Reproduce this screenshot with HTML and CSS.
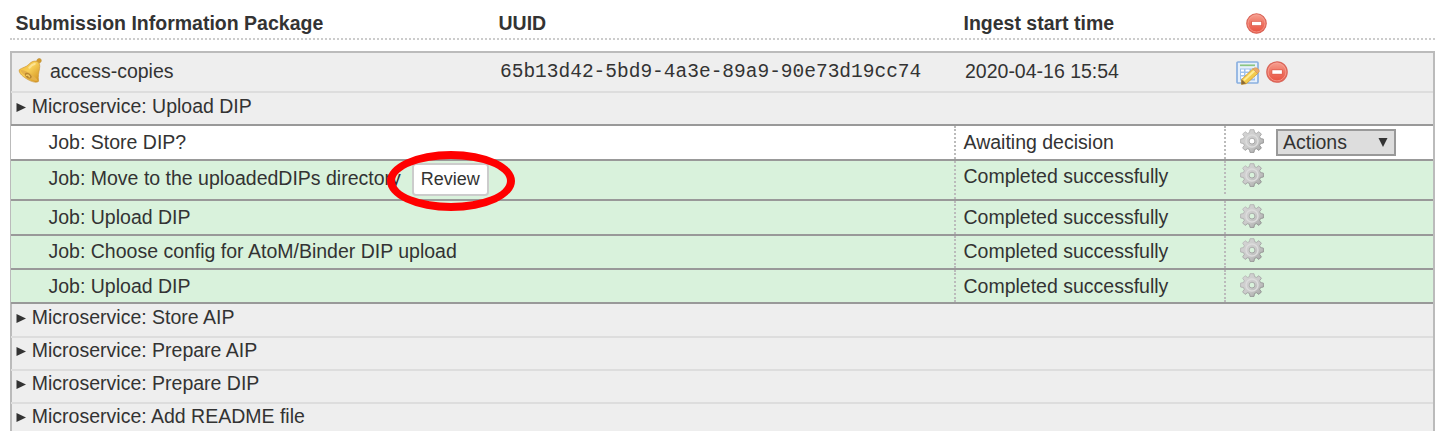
FILE: index.html
```html
<!DOCTYPE html>
<html lang="en">
<head>
<meta charset="utf-8">
<title>Ingest</title>
<link rel="stylesheet" href="styles.css">
</head>
<body>
<svg class="defs" width="0" height="0" aria-hidden="true">
  <defs>
    <linearGradient id="redFill" x1="0" y1="0" x2="0" y2="1"><stop offset="0" stop-color="#f7a292"/><stop offset=".5" stop-color="#ee7362"/><stop offset="1" stop-color="#e9503f"/></linearGradient>
    <linearGradient id="gearFill" x1="0" y1="0" x2="1" y2="1"><stop offset="0" stop-color="#d6d6d6"/><stop offset=".55" stop-color="#cacaca"/><stop offset="1" stop-color="#a0a0a0"/></linearGradient>
    <linearGradient id="gearEdge" x1="0" y1="0" x2="1" y2="1"><stop offset="0" stop-color="#c2c2c2"/><stop offset="1" stop-color="#858585"/></linearGradient>
    <linearGradient id="bellFill" x1="0" y1="0" x2="1" y2="1"><stop offset="0" stop-color="#eeb02c"/><stop offset=".45" stop-color="#f7cf58"/><stop offset="1" stop-color="#d08c18"/></linearGradient>
    <symbol id="minus" viewBox="0 0 22 22">
      <circle cx="11" cy="11" r="10.200" fill="url(#redFill)" stroke="#d9665a" stroke-width="1.200"/>
      <circle cx="11" cy="11" r="8.900" fill="none" stroke="#f6a194" stroke-width=".8"/>
      <rect x="6.300" y="9.200" width="9.600" height="3.600" fill="#fff" stroke="#dd5a4a" stroke-width="1.400" paint-order="stroke"/>
    </symbol>
    <symbol id="gear" viewBox="0 0 24 24">
      <path fill="url(#gearFill)" stroke="url(#gearEdge)" stroke-width=".9" stroke-linejoin="round" fill-rule="evenodd" d="M10 .7h4l.5 2.900 2 .8 2.400-1.700 2.500 2.500-1.700 2.400.8 2 2.900.5v3.900l-2.900.5-.8 2 1.700 2.400-2.500 2.500-2.400-1.700-2 .8-.5 2.900h-4l-.5-2.900-2-.8-2.400 1.700-2.500-2.500 1.700-2.400-.8-2-2.900-.5v-3.900l2.900-.5.8-2-1.700-2.400 2.500-2.500 2.400 1.700 2-.8zM12 9.200a2.900 2.900 0 1 0 0 5.800 2.900 2.900 0 0 0 0-5.800z"/>
      <circle cx="12" cy="12" r="6" fill="none" stroke="#dcdcdc" stroke-width="1.500"/>
    </symbol>
  </defs>
</svg>

<header class="head">
  <div class="head-name">Submission Information Package</div>
  <div class="head-uuid">UUID</div>
  <div class="head-time">Ingest start time</div>
  <div class="head-action"><svg width="21" height="21"><use href="#minus"/></svg></div>
</header>

<main class="sip">
  <div class="sip-row">
    <div class="sip-name">
      <svg class="bell" width="24" height="25" viewBox="0 0 24 25">
        <path d="M18.600 3.600c0-2.500 2.300-3.900 4-2.700 1.400 1.300.8 3.700-1.500 4.200z" fill="#d29a2c" stroke="#b98a35" stroke-width=".5"/>
        <path d="M1.300 11.800C4 9.500 8.300 9.300 11 6.200 13.500 3.400 16.500 2.500 19 3.500c2.800 1.200 3.100 3.700 2.500 7.200-.7 4-1.700 7.300-.9 12.600-2 1.700-6.600.7-10.600-1.700C5.500 19.200.3 15 1.300 11.800z" fill="url(#bellFill)" stroke="#cf9836" stroke-width=".7"/>
        <path d="M2.600 12.200c3.300-.9 14.700 5.300 17.300 10.600-4 .8-16.600-6.100-17.300-10.600z" fill="#e5b24a"/>
        <path d="M7.300 15.300c1.600-1.400 5 .3 6.500 3.200-.2 1.900-1.900 2.500-3.200 2.100-2.200-.6-4.300-3.200-3.300-5.300z" fill="#b8852f"/>
        <path d="M8.600 17.200c1.300-.4 2.300.2 2.800 1.500" fill="none" stroke="#f2cc66" stroke-width="1.500" stroke-linecap="round"/>
        <path d="M11.400 9.700c1.600-2.200 3.200-3.500 5.300-3.900" fill="none" stroke="#fce392" stroke-width="2.200" stroke-linecap="round"/>
      </svg>
      <span>access-copies</span>
    </div>
    <div class="sip-uuid">65b13d42-5bd9-4a3e-89a9-90e73d19cc74</div>
    <div class="sip-time">2020-04-16 15:54</div>
    <div class="sip-actions">
      <svg width="24" height="24" viewBox="0 0 24 24">
        <rect x="1" y="1" width="21" height="21" rx="1" fill="#e6f0fb" stroke="#8ab0e0" stroke-width="1.700"/>
        <path d="M4 4.300h15" stroke="#8bc581" stroke-width="1.700"/>
        <path d="M4 7.500h15v12H4z" fill="#9fc1ec"/>
        <path d="M5 8.500h3v2H5zm4.500 0h4v2h-4zm5.500 0h3.500v2H15zM5 12h3v2H5zm4.500 0h4v2h-4zm5.500 0h3.500v2H15zM5 15.500h3v2H5zm4.500 0h4v2h-4zm5.500 0h3.500v2H15z" fill="#fff"/>
        <path d="M5.600 18.500 16.900 7.700l5 4.600-11.600 10.400-4.700.7z" fill="#f3cb4b" stroke="#d09a36" stroke-width=".8"/>
        <path d="M8 19.300 18.700 9.400" stroke="#ffec94" stroke-width="2"/>
        <path d="m16.700 8 1.900-1.200c2.200-.6 5.300 1.600 4.600 4l-1.500 1.700z" fill="#eaab67" stroke="#d08d50" stroke-width=".5"/>
        <path d="m5.600 18.500 4.500 4-4.800.9z" fill="#8a6937"/>
      </svg>
      <svg width="22" height="22"><use href="#minus"/></svg>
    </div>
  </div>

  <div class="micro micro-open"><i class="caret"></i>Microservice: Upload DIP</div>

  <div class="job job-waiting">
    <div class="job-name">Job: Store DIP?</div>
    <div class="job-status">Awaiting decision</div>
    <div class="job-tools"><svg width="24" height="24"><use href="#gear"/></svg><div class="select" role="button"><span>Actions</span><i class="select-arrow"></i></div></div>
  </div>
  <div class="job job-review">
    <div class="job-name">Job: Move to the uploadedDIPs directory
      <span class="review-wrap"><button class="review">Review</button><i class="ring"></i></span>
    </div>
    <div class="job-status">Completed successfully</div>
    <div class="job-tools"><svg width="24" height="24"><use href="#gear"/></svg></div>
  </div>
  <div class="job">
    <div class="job-name">Job: Upload DIP</div>
    <div class="job-status">Completed successfully</div>
    <div class="job-tools"><svg width="24" height="24"><use href="#gear"/></svg></div>
  </div>
  <div class="job job-tight">
    <div class="job-name">Job: Choose config for AtoM/Binder DIP upload</div>
    <div class="job-status">Completed successfully</div>
    <div class="job-tools"><svg width="24" height="24"><use href="#gear"/></svg></div>
  </div>
  <div class="job job-last">
    <div class="job-name">Job: Upload DIP</div>
    <div class="job-status">Completed successfully</div>
    <div class="job-tools"><svg width="24" height="24"><use href="#gear"/></svg></div>
  </div>

  <div class="micro micro-first"><i class="caret"></i>Microservice: Store AIP</div>
  <div class="micro"><i class="caret"></i>Microservice: Prepare AIP</div>
  <div class="micro"><i class="caret"></i>Microservice: Prepare DIP</div>
  <div class="micro"><i class="caret"></i>Microservice: Add README file</div>
</main>
</body>
</html>
```

FILE: styles.css
```css
* { box-sizing: border-box; }
html, body { height: 431px; overflow: hidden; }
body {
  margin: 0;
  padding: 0 12px 0 10px;
  background: #fff;
  color: #333;
  font: 19.5px/22px "Liberation Sans", Arial, sans-serif;
}
svg { display: block; flex: none; }
.defs { position: absolute; }

.head {
  display: grid;
  grid-template-columns: 483px 465px 282px 1fr;
  height: 40px;
  padding: 12px 0 0 5.5px;
  border-bottom: 2px dotted #ccc;
  font-weight: bold;
  white-space: nowrap;
}
.head-action { padding: 1px 0 0 0.5px; }

.sip {
  height: 400px;
  margin-top: 11px;
  border: 2px solid #bbb;
  background: #eee;
  white-space: nowrap;
}
.sip-row {
  display: grid;
  grid-template-columns: 488px 465px 271px 1fr;
  height: 40px;
  margin-left: -1px;
  padding: 7px 0 0 1px;
  border-bottom: 2px solid #ddd;
}
.sip-name { display: flex; gap: 8px; padding-left: 6px; }
.bell { margin-top: -2px; }
.sip-uuid {
  padding-top: 1px;
  font-family: "Liberation Mono", "Courier New", monospace;
}
.sip-actions { display: flex; gap: 6px; padding-top: 1px; }

.micro {
  display: flex;
  height: 33px;
  margin-left: -1px;
  padding: 1px 0 0 5px;
  border-bottom: 2px solid #ddd;
}
.micro-open { padding-top: 2px; border-bottom-color: #999; }
.micro-first { height: 34px; padding-top: 2px; }
.caret {
  width: 10px;
  height: 9px;
  margin: 8px 5.8px 0 0;
  background: #333;
  clip-path: polygon(5% 0, 100% 50%, 5% 100%);
}

.job {
  display: grid;
  grid-template-columns: 943px 270px 1fr;
  height: 35px;
  margin-left: -1px;
  border-bottom: 2px solid #999;
  background: #d9f2dc;
}
.job-waiting { background: #fff; }
.job-review { height: 40px; }
.job-tight, .job-last { height: 34px; }
.job-name { display: flex; padding: 5px 0 0 37.5px; }
.job-status { padding: 5px 0 0 7.5px; border-left: 2px dotted #bbb; }
.job-tools { display: flex; gap: 12px; padding: 3px 0 0 14px; border-left: 2px dotted #bbb; }
.job-review .job-name { padding-top: 6px; }
.job-review .job-status,
.job-tight .job-name,
.job-tight .job-status { padding-top: 4px; }
.job-review .job-tools,
.job-tight .job-tools { padding-top: 2px; }
.job-review .job-tools { height: 33px; }

.select {
  display: flex;
  justify-content: space-between;
  width: 120px;
  height: 27px;
  padding: 0 6px 0 5px;
  border: 2px solid #999;
  background: #ddd;
}
.select-arrow {
  width: 10px;
  height: 9px;
  margin-top: 7px;
  background: #333;
  clip-path: polygon(5% 0, 95% 0, 50% 100%);
}

.review-wrap { position: relative; margin: -4px 0 0 11px; height: 33px; }
.review {
  display: block;
  width: 77px;
  height: 33px;
  padding: 0;
  border: 2px solid #ccc;
  border-radius: 4px;
  background: #fff;
  color: #333;
  font: 18px/27px "Liberation Sans", Arial, sans-serif;
}
.ring {
  position: absolute;
  left: -25px;
  top: -12px;
  width: 128px;
  height: 60px;
  border: 8px solid #f00;
  border-radius: 50%;
}
```
